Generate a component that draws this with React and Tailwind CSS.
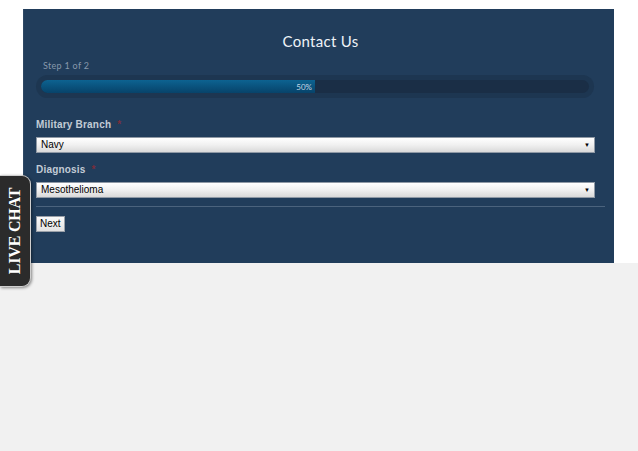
import React from "react";

const FakeSelect = ({ value }) => (
  <div className="mr-[10px] flex h-[16px] items-center justify-between border border-[#8f99a5] bg-linear-to-b from-[#ffffff] via-[#f0f0f0] to-[#d9d9d9] pl-[4px] pr-[4px] text-[10px] leading-none text-black">
    <span>{value}</span>
    <span className="text-[6px] leading-none">▼</span>
  </div>
);

const Label = ({ children, className = "" }) => (
  <div className={`h-[14px] text-[10px] font-bold leading-[14px] tracking-[0.2px] text-[#c3ccd6] ${className}`}>
    {children} <span className="ml-[3px] text-[#7a2d3c]">*</span>
  </div>
);

export default function App() {
  return (
    <div className="relative h-[451px] w-[638px] overflow-hidden bg-[#f1f1f1] font-['Liberation_Sans',Arial,sans-serif]">
      <div className="h-[263px] bg-white pt-[9px]">
        <div className="ml-[23px] h-[254px] w-[591px] border-l border-[#2e4864] bg-[#213d5b] pl-[12px] pr-[9px]">
          {/* Title */}
          <div className="pt-[22px] text-center font-['Lato',sans-serif] text-[15px] leading-[20px] tracking-[0.3px] text-[#eef3f8]">
            Contact Us
          </div>

          {/* Step + progress */}
          <div className="mt-[9px] pl-[7px] font-['Lato',sans-serif] text-[9px] leading-[12px] tracking-[0.3px] text-[#8798ab]">
            Step 1 of 2
          </div>
          <div className="mt-[3px] mr-[11px] flex h-[23px] items-center rounded-full bg-[#1d3651] px-[5px]">
            <div className="flex h-[13px] w-full rounded-full bg-[#1a2e46]">
              <div className="flex h-full w-1/2 items-center justify-end rounded-l-full bg-linear-to-b from-[#0d6391] to-[#07436a] pr-[3px] font-['Lato',sans-serif] text-[8px] leading-none text-[#c5d8e6]">
                50%
              </div>
            </div>
          </div>

          {/* Fields */}
          <Label className="mt-[20px]">Military Branch</Label>
          <div className="mt-[5px]">
            <FakeSelect value="Navy" />
          </div>

          <Label className="mt-[10px]">Diagnosis</Label>
          <div className="mt-[5px]">
            <FakeSelect value="Mesothelioma" />
          </div>

          <div className="mt-[8px] h-px bg-[#4b637d]" />

          <button className="mt-[9px] h-[16px] border border-[#9aa0a8] bg-linear-to-b from-[#fafafa] to-[#e2e2e2] px-[3px] text-[10px] leading-none text-black">
            Next
          </button>
        </div>
      </div>

      {/* Live chat tab */}
      <div className="absolute left-0 top-[175px] flex h-[112px] w-[31px] items-center justify-center rounded-r-[9px] border border-l-0 border-[#cfcfcf] bg-[#2b2b2b] shadow-[1px_1px_3px_rgba(0,0,0,0.45)]">
        <span className="-rotate-90 whitespace-nowrap font-['Liberation_Serif',serif] text-[16px] font-bold leading-none tracking-[-0.2px] text-white">
          LIVE CHAT
        </span>
      </div>
    </div>
  );
}
